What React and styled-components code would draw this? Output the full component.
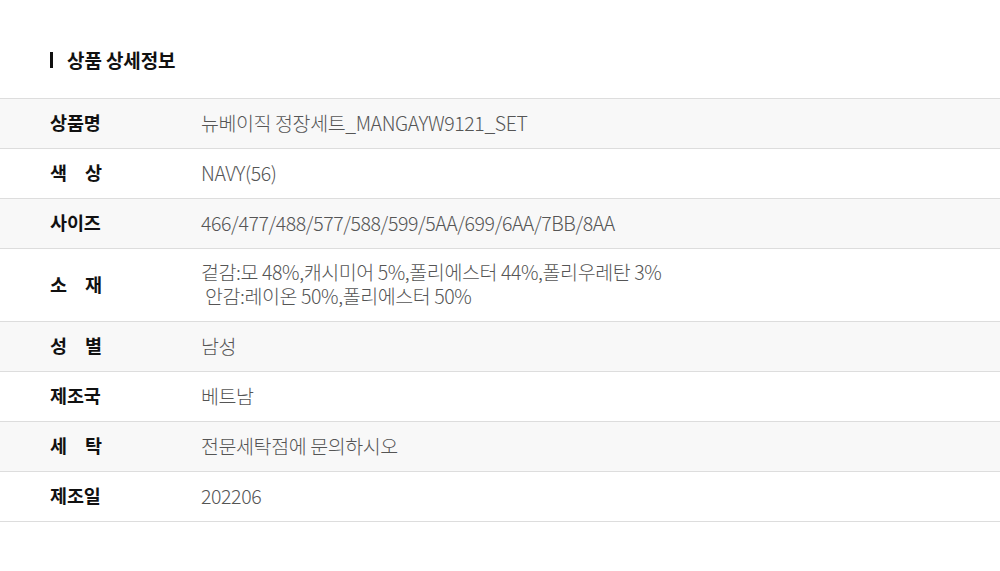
import React from "react";
import styled, { createGlobalStyle } from "styled-components";

const Global = createGlobalStyle`
  html, body { margin: 0; padding: 0; background: #fff; }
  body { font-family: "Noto Sans CJK KR", "Noto Sans", sans-serif; }
`;

const Page = styled.div`
  width: 1000px;
  padding-top: 46px;
`;

const Title = styled.h2`
  margin: 0 0 24px 50px;
  display: flex;
  align-items: center;
  gap: 14px;
  font-size: 19px;
  font-weight: 700;
  color: #111;
  letter-spacing: -0.1px;
  line-height: 28px;
`;

const Bar = styled.span`
  width: 3px;
  height: 16px;
  background: #111;
`;

const Table = styled.div`
  border-top: 1px solid #ddd;
`;

const Row = styled.div`
  display: grid;
  grid-template-columns: 201px 1fr;
  align-items: center;
  padding: 11px 0 13px;
  background: ${(p) => (p.$shade ? "#f8f8f8" : "#fff")};
  border-bottom: 1px solid #ddd;
`;

const Label = styled.div`
  padding-left: 50px;
  font-size: 18.5px;
  font-weight: 700;
  color: #111;
  line-height: 25px;
  letter-spacing: -0.1px;
`;

const Spread = styled.span`
  display: inline-block;
  width: 52px;
  text-align: justify;
  text-align-last: justify;
`;

const Value = styled.div`
  font-size: 19.5px;
  font-weight: 300;
  color: #555;
  line-height: 24px;
  letter-spacing: -0.4px;
  white-space: pre-wrap;
`;

const rows = [
  ["상품명", "뉴베이직 정장세트_MANGAYW9121_SET"],
  ["색 상", "NAVY(56)", true],
  ["사이즈", "466/477/488/577/588/599/5AA/699/6AA/7BB/8AA"],
  ["소 재", "겉감:모 48%,캐시미어 5%,폴리에스터 44%,폴리우레탄 3%\n 안감:레이온 50%,폴리에스터 50%", true],
  ["성 별", "남성", true],
  ["제조국", "베트남"],
  ["세 탁", "전문세탁점에 문의하시오", true],
  ["제조일", "202206"],
];

export default function App() {
  return (
    <Page>
      <Global />
      <Title>
        <Bar />
        상품 상세정보
      </Title>
      <Table>
        {rows.map(([k, v, spread], i) => (
          <Row key={k} $shade={i % 2 === 0}>
            <Label>{spread ? <Spread>{k}</Spread> : k}</Label>
            <Value>{v}</Value>
          </Row>
        ))}
      </Table>
    </Page>
  );
}
